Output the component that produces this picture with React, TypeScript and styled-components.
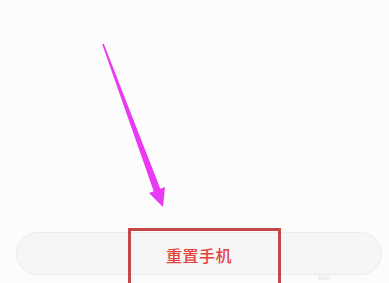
import styled, { createGlobalStyle } from 'styled-components';

const GlobalStyle = createGlobalStyle`
	html, body {
		margin: 0;
		padding: 0;
		background: #fdfcfd;
	}
	* {
		box-sizing: border-box;
	}
`;

const App = () => {
	return (
		<>
			<GlobalStyle />
			<Screen>
				<ActionArea>
					<ResetButton type="button">重置手机</ResetButton>
				</ActionArea>

				<PointerArrow viewBox="0 0 389 283" aria-hidden="true">
					<polygon
						points="102.3,44.4 103.7,43.6 160.3,188.8 165,187 163,207 149,193 153.7,191.3"
						fill="#e83af2"
					/>
				</PointerArrow>
				<HighlightBox />
				<Watermark>Bai</Watermark>
			</Screen>
		</>
	);
};
export default App;

const Screen = styled.div`
	position: relative;
	width: 389px;
	height: 283px;
	overflow: hidden;
	background: #fdfcfd;
	display: flex;
	flex-direction: column;
	justify-content: flex-end;
	padding: 0 7px 8px 16px;
`;

const ActionArea = styled.div`
	display: flex;
`;

const ResetButton = styled.button`
	flex: 1;
	height: 43px;
	border-radius: 22px;
	border: 1px solid #ececee;
	background: #f6f5f7;
	color: #e2433d;
	font-family: 'Noto Sans CJK SC', 'Noto Sans', sans-serif;
	font-size: 16px;
	font-weight: 500;
	letter-spacing: 0.5px;
	padding: 0;
	padding-top: 2px;
`;

const PointerArrow = styled.svg`
	position: absolute;
	inset: 0;
	width: 389px;
	height: 283px;
	pointer-events: none;
`;

const HighlightBox = styled.div`
	position: absolute;
	left: 128px;
	top: 228px;
	width: 153px;
	height: 70px;
	border: 3px solid #c4484a;
	pointer-events: none;
`;

const Watermark = styled.span`
	position: absolute;
	left: 318px;
	top: 273px;
	font-family: 'Liberation Sans', sans-serif;
	font-size: 8px;
	line-height: 9px;
	font-weight: 700;
	color: #ececef;
`;
